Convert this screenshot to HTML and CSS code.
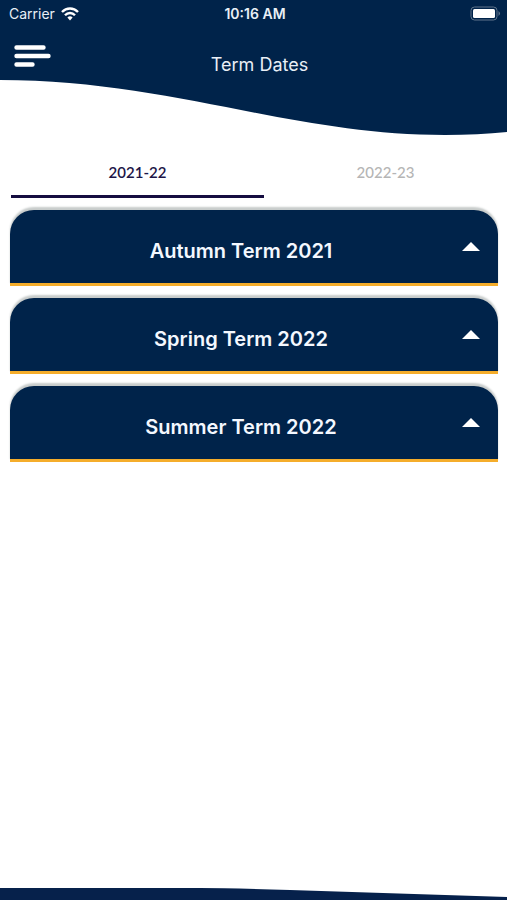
FILE: index.html
```html
<!DOCTYPE html>
<html lang="en">
<head>
    <meta charset="UTF-8">
    <meta name="viewport" content="width=device-width, initial-scale=1.0">
    <title>Term Dates</title>
    <link rel="stylesheet" href="styles.css">
</head>
<body>
    <header class="header">
        <div class="status-bar">
            <div class="carrier">
                <span>Carrier</span>
                <svg width="18" height="14" viewBox="0 0 18 14" fill="none" stroke="#ffffff" stroke-width="2.4">
                    <path d="M1 5 C5.5 0.4 12.5 0.4 17 5"/>
                    <path d="M4 8.2 C6.8 5.2 11.2 5.2 14 8.2"/>
                    <path d="M6.4 10.4 Q9 8 11.6 10.4 L9 13.4 Z" fill="#ffffff" stroke="none"/>
                </svg>
            </div>
            <span class="time">10:16 AM</span>
            <div class="battery">
                <svg width="31" height="15" viewBox="0 0 31 15">
                    <rect x="1" y="1" width="26" height="13" rx="3.5" fill="none" stroke="#60758b"/>
                    <rect x="3" y="3" width="22" height="9" rx="1.5" fill="#ffffff"/>
                    <path d="M28.5 5 Q31.5 7.5 28.5 10 Z" fill="#60758b"/>
                </svg>
            </div>
        </div>
        <nav class="nav-bar">
            <button class="menu-btn" type="button" aria-label="Menu">
                <svg width="38" height="24" viewBox="0 0 38 24" stroke="#ffffff" stroke-width="4.4" stroke-linecap="round">
                    <path d="M2.5 3.5 H29.5 M2.5 12 H34.5 M2.5 20.5 H18.5"/>
                </svg>
            </button>
            <h1>Term Dates</h1>
        </nav>
        <svg class="wave" viewBox="0 0 507 56" preserveAspectRatio="none">
            <path d="M0 0 H507 V52 Q478 55 445 55 C290 55 170 0 0 0 Z" fill="#00234a"/>
        </svg>
    </header>

    <main class="content">
        <div class="tabs" role="tablist">
            <button class="tab active" type="button" role="tab" aria-selected="true">2021-22</button>
            <button class="tab" type="button" role="tab" aria-selected="false">2022-23</button>
        </div>
        <div class="terms">
            <button class="term" type="button">
                <span class="term-name">Autumn Term 2021</span>
                <svg class="arrow" width="18" height="9" viewBox="0 0 18 9"><path d="M0 9 L9 0 L18 9 Z" fill="#ffffff"/></svg>
            </button>
            <button class="term" type="button">
                <span class="term-name">Spring Term 2022</span>
                <svg class="arrow" width="18" height="9" viewBox="0 0 18 9"><path d="M0 9 L9 0 L18 9 Z" fill="#ffffff"/></svg>
            </button>
            <button class="term" type="button">
                <span class="term-name">Summer Term 2022</span>
                <svg class="arrow" width="18" height="9" viewBox="0 0 18 9"><path d="M0 9 L9 0 L18 9 Z" fill="#ffffff"/></svg>
            </button>
        </div>
    </main>

    <footer class="footer">
        <svg class="footer-wave" viewBox="0 0 507 13" preserveAspectRatio="none">
            <path d="M0 1 H200 Q230 1 290 3 L507 10 V13 H0 Z" fill="#06214b"/>
        </svg>
    </footer>
</body>
</html>
```
FILE: styles.css
```css
body {
    font-family: Inter, "Liberation Sans", sans-serif;
    margin: 0;
    min-height: 100vh;
    display: flex;
    flex-direction: column;
    background-color: #ffffff;
}

button {
    font: inherit;
    border: none;
    background: none;
    cursor: pointer;
}

svg {
    display: block;
}

/* header */
.header {
    color: #e9eff6;
}

.status-bar {
    display: grid;
    grid-template-columns: 1fr auto 1fr;
    align-items: start;
    height: 28px;
    padding: 0 6px 0 9px;
    background-color: #00234a;
    font-size: 14px;
    line-height: 28px;
}

.carrier {
    display: flex;
    align-items: center;
    gap: 6px;
    height: 27px;
}

.time {
    font-weight: 600;
}

.battery {
    justify-self: end;
    padding-top: 6px;
}

.nav-bar {
    display: grid;
    grid-template-columns: 60px 1fr 48px;
    height: 52px;
    background-color: #00234a;
}

.menu-btn {
    align-self: center;
    padding: 2px 0 0 14px;
}

.nav-bar h1 {
    margin: 0;
    padding-top: 20px;
    font-size: 18px;
    line-height: 34px;
    font-weight: 400;
    text-align: center;
}

.wave {
    width: 100%;
    height: 56px;
}

/* tabs */
.content {
    flex: 1;
    padding: 12px 9px 0 10px;
}

.tabs {
    display: grid;
    grid-template-columns: 51% 1fr;
    padding-left: 1px;
    margin-right: -9px;
}

.tab {
    height: 50px;
    padding: 0;
    border-bottom: 3px solid transparent;
    font-family: Lato, sans-serif;
    font-size: 15px;
    color: #b5b5b5;
    font-weight: 500;
}

.tab.active {
    border-bottom-color: #150d40;
    color: #1d1547;
    font-weight: 600;
}

/* term cards */
.terms {
    display: flex;
    flex-direction: column;
    gap: 12px;
    padding-top: 12px;
}

.term {
    display: flex;
    align-items: center;
    height: 76px;
    padding: 8px 18px 0 10px;
    border-bottom: 3px solid #f5ad2b;
    border-radius: 24px 24px 0 0;
    background-color: #00234a;
    box-shadow: 0 -3px 2px #c8cccb;
    color: #f4f8ff;
}

.term-name {
    flex: 1;
    font-size: 20px;
    font-weight: 600;
    text-align: center;
}

.arrow {
    margin-bottom: 8px;
}

/* footer */
.footer-wave {
    width: 100%;
    height: 13px;
}
```
